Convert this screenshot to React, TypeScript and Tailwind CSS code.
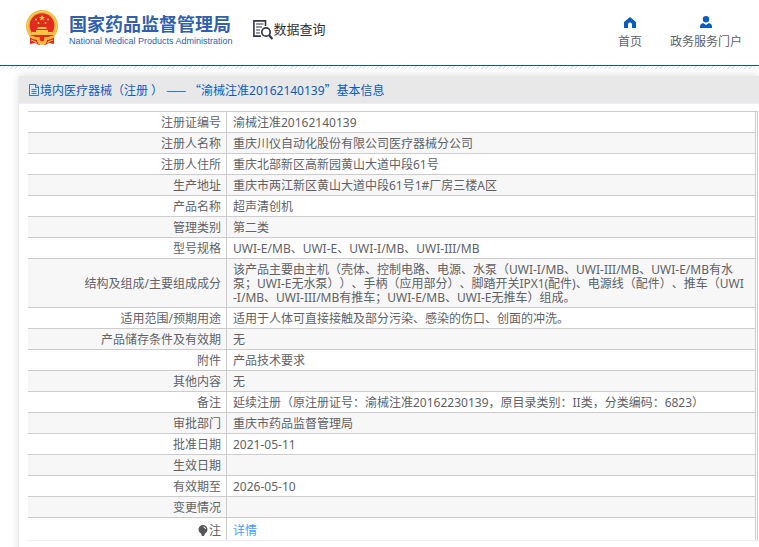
import type { ReactNode } from "react";

type Row = { label: ReactNode; value: ReactNode };

const rows: Row[] = [
  { label: "注册证编号", value: "渝械注准20162140139" },
  { label: "注册人名称", value: "重庆川仪自动化股份有限公司医疗器械分公司" },
  { label: "注册人住所", value: "重庆北部新区高新园黄山大道中段61号" },
  { label: "生产地址", value: "重庆市两江新区黄山大道中段61号1#厂房三楼A区" },
  { label: "产品名称", value: "超声清创机" },
  { label: "管理类别", value: "第二类" },
  { label: "型号规格", value: "UWI-E/MB、UWI-E、UWI-I/MB、UWI-III/MB" },
  {
    label: "结构及组成/主要组成成分",
    value: (
      <>
        该产品主要由主机（壳体、控制电路、电源、水泵（UWI-I/MB、UWI-III/MB、UWI-E/MB有水
        <br />
        泵；UWI-E无水泵））、手柄（应用部分）、脚踏开关IPX1(配件)、电源线（配件）、推车（UWI
        <br />
        -I/MB、UWI-III/MB有推车；UWI-E/MB、UWI-E无推车）组成。
      </>
    ),
  },
  { label: "适用范围/预期用途", value: "适用于人体可直接接触及部分污染、感染的伤口、创面的冲洗。" },
  { label: "产品储存条件及有效期", value: "无" },
  { label: "附件", value: "产品技术要求" },
  { label: "其他内容", value: "无" },
  { label: "备注", value: "延续注册（原注册证号：渝械注准20162230139，原目录类别：II类，分类编码：6823）" },
  { label: "审批部门", value: "重庆市药品监督管理局" },
  { label: "批准日期", value: "2021-05-11" },
  { label: "生效日期", value: "" },
  { label: "有效期至", value: "2026-05-10" },
  { label: "变更情况", value: "" },
];

function Emblem() {
  return (
    <svg width="34" height="36" viewBox="0 0 34 36" aria-hidden="true">
      <circle cx="17" cy="16" r="16" fill="#eeb43c" />
      <circle cx="17" cy="16" r="14.6" fill="none" stroke="#f8d56b" strokeWidth="1" />
      <path d="M5 25 L29 25 L29 34 L24 33 L20 35 L17 33 L14 35 L10 33 L5 34Z" fill="#df2a20" />
      <circle cx="17" cy="15.5" r="12.3" fill="#e32a20" />
      <path d="M17 5l.9 2h2.1l-1.7 1.3.6 2.1-1.9-1.2-1.9 1.2.6-2.1L14 7h2.1z" fill="#f8ce4d" />
      <g fill="#f8ce4d">
        <circle cx="11" cy="9.5" r="1" />
        <circle cx="23" cy="9.5" r="1" />
        <circle cx="13.5" cy="13" r="1" />
        <circle cx="20.5" cy="13" r="1" />
      </g>
      <path d="M13 17h8l1 2H12zM11 20h12v2h4v3H7v-3h4z" fill="#f5c544" />
      <path d="M5 25q12 5 24 0l1 2q-5 3-8 3a5 5 0 0 1-10 0q-4 0-8-3z" fill="#f0b63a" />
      <circle cx="17" cy="29" r="2.4" fill="#e32a20" />
      <path d="M6 30l5 2v2M28 30l-5 2v2M13 33h8" stroke="#f5c544" fill="none" />
    </svg>
  );
}

function SearchDocument() {
  return (
    <svg width="20" height="20" viewBox="0 0 20 20" fill="none" stroke="#35354a" aria-hidden="true">
      <path d="M12.5 6V.9H.9v15.2h7" strokeWidth="1.6" />
      <path d="M3 4h7.500M3 7h6M3 10h4M3 13h4" strokeWidth="1.1" />
      <circle cx="13" cy="12" r="4.200" strokeWidth="1.7" />
      <path d="M16 15l3.500 4" strokeWidth="2.2" />
    </svg>
  );
}

export default function App() {
  return (
    <div className="min-h-screen overflow-x-hidden bg-white font-['Noto_Sans','Noto_Sans_CJK_SC',sans-serif] text-xs text-[#606266] [text-spacing-trim:space-all]">
      <header className="flex h-[65px] items-start justify-between pl-[25px] pr-[17px]">
        <div className="flex items-start">
          <a href="#home" className="flex items-start gap-[10px] pt-[10px] text-[#315fae]">
            <Emblem />
            <span className="flex flex-col pt-1">
              <span className="whitespace-nowrap text-lg font-bold leading-5">国家药品监督管理局</span>
              <span className="whitespace-nowrap font-['Liberation_Sans',sans-serif] text-[9px] leading-[14px]">
                National Medical Products Administration
              </span>
            </span>
          </a>
          <h1 className="ml-5 mt-5 flex gap-px text-[13px] leading-[18px] text-[#333]">
            <SearchDocument />
            数据查询
          </h1>
        </div>
        <nav className="flex gap-7 pt-4 leading-[18px]">
          <a href="#index" className="flex flex-col items-center gap-1">
            <svg width="12" height="13" viewBox="0 0 12 13" fill="#0a5cc0" aria-hidden="true">
              <path d="M6 1l6 5v6H8V8.500a2 2 0 0 0-4 0V12H0V6z" />
            </svg>
            首页
          </a>
          <a href="#portal" className="flex flex-col items-center gap-1">
            <svg width="12" height="13" viewBox="0 0 12 13" fill="#0a5cc0" aria-hidden="true">
              <circle cx="6" cy="3.300" r="3.200" />
              <path d="M0 12V10q0-2 3-3l3 2 3-2q3 1 3 3v2z" />
            </svg>
            政务服务门户
          </a>
        </nav>
      </header>
      <div className="h-px bg-[#0b57ad]" />
      <div className="h-[3px] bg-[repeating-linear-gradient(135deg,#e6e4e4_0_1px,#fff_1px_3px)]" />

      <main className="ml-[19px] mt-[7px] pb-6 shadow-[0_0_8px_rgba(0,0,0,0.15)]">
        <h2 className="flex h-7 items-center border-b border-[#ebeef5] bg-[#e8e8e8] pl-[10px] text-[#0a5cc0]">
          <svg width="11" height="12" viewBox="0 0 11 12" fill="none" stroke="currentColor" strokeWidth="0.8" aria-hidden="true">
            <path d="M.5.500H7L9.500 3v8.500H.5zM6.500.500V3.500h3M2.500 5.500h5M2.500 7.500h5M2.500 9.500h5" />
          </svg>
          <span className="whitespace-pre pt-px">
            境内医疗器械（注册 ） <span className="font-['Noto_Sans_CJK_SC',sans-serif]">—— “</span>
            渝械注准20162140139<span className="font-['Noto_Sans_CJK_SC',sans-serif]">”</span>基本信息
          </span>
        </h2>
        <div className="ml-[9px] mr-px mt-[7px] border-b border-r border-t border-b-[#ebeef5] border-r-[#ccc] border-t-[#ccc] pr-px">
          <table className="w-full border-separate border-spacing-0 border-r border-[#ccc] leading-[14px]">
            <tbody>
              {rows.map((row, i) => (
                <tr key={i} className="h-[21px] even:bg-[#f7f7f7]">
                  <th scope="row" className="w-[199px] border-b border-r border-[#ccc] pb-[2px] pr-[5px] pt-1 text-right font-normal">
                    {row.label}
                  </th>
                  <td className="whitespace-nowrap border-b border-[#ccc] pb-[2px] pl-[6px] pt-1">{row.value}</td>
                </tr>
              ))}
              <tr className="h-[22px]">
                <th scope="row" className="border-r border-[#ccc] pr-[5px] pt-[3px] font-normal">
                  <span className="flex items-center justify-end gap-px">
                    <svg width="10" height="12" viewBox="0 0 10 12" aria-hidden="true">
                      <path d="M5 0a4.500 4.500 0 0 1 2 8.500L6 11H4L3 8.500A4.500 4.500 0 0 1 5 0z" fill="#55575b" />
                      <path d="M5.500 2q2 0 2 2" stroke="#fff" fill="none" />
                    </svg>
                    注
                  </span>
                </th>
                <td className="pl-[6px] pt-[3px]">
                  <a href="#detail" className="text-[#409eff]">详情</a>
                </td>
              </tr>
            </tbody>
          </table>
        </div>
      </main>
    </div>
  );
}
